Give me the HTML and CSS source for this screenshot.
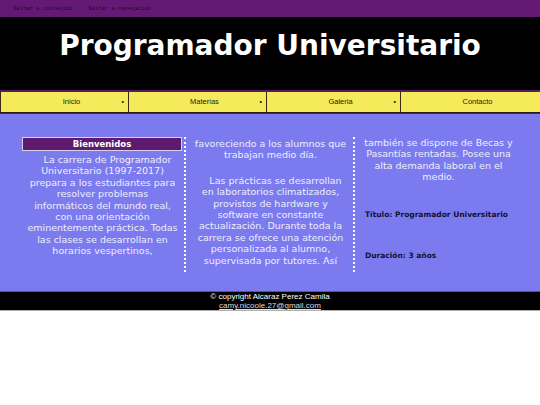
FILE: index.html
```html
<!DOCTYPE html>
<html lang="es">
<head>
<meta charset="utf-8">
<title>Programador Universitario</title>
<link rel="stylesheet" href="styles.css">
</head>
<body>
<div class="skip">
  <a href="#contenido">Saltar a contenido</a>
  <a href="#navegacion">Saltar a navegación</a>
</div>
<header class="header">
  <h1>Programador Universitario</h1>
</header>
<nav class="nav" id="navegacion">
  <a class="nav-item bullet" href="#">Inicio</a>
  <a class="nav-item bullet" href="#">Materias</a>
  <a class="nav-item bullet" href="#">Galeria</a>
  <a class="nav-item" href="#">Contacto</a>
</nav>
<main class="main" id="contenido">
  <div class="col col-1">
    <h2 class="welcome">Bienvenidos</h2>
    <p class="txt txt-first indent">La carrera de Programador Universitario (1997-2017) prepara a los estudiantes para resolver problemas informáticos del mundo real, con una orientación eminentemente práctica. Todas las clases se desarrollan en horarios vespertinos,</p>
  </div>
  <div class="col col-2">
    <p class="txt txt-top">favoreciendo a los alumnos que trabajan medio día.</p>
    <p class="txt txt-gap indent">Las prácticas se desarrollan en laboratorios climatizados, provistos de hardware y software en constante actualización. Durante toda la carrera se ofrece una atención personalizada al alumno, supervisada por tutores. Así</p>
  </div>
  <div class="col col-3">
    <p class="txt">también se dispone de Becas y Pasantías rentadas. Posee una alta demanda laboral en el medio.</p>
    <p class="label label-title">Título: Programador Universitario</p>
    <p class="label label-dur">Duración: 3 años</p>
  </div>
</main>
<footer class="footer">
  <div>© copyright Alcaraz Perez Camila</div>
  <a href="#">camy.nicoole.27@gmail.com</a>
</footer>
</body>
</html>
```
FILE: styles.css
```css
html, body {
  margin: 0;
  padding: 0;
  background: #ffffff;
}

.skip {
  height: 17px;
  background: #641a74;
  display: flex;
  align-items: center;
  gap: 16px;
  padding-left: 13px;
}
.skip a {
  font-family: "Liberation Mono", monospace;
  font-size: 5.5px;
  line-height: 6px;
  color: #1e0a24;
  text-decoration: none;
}

.header {
  background: #000000;
  padding: 12px 0 28px;
}
.header h1 {
  margin: 0;
  font-family: "DejaVu Sans", sans-serif;
  font-weight: bold;
  font-size: 28px;
  line-height: 33px;
  color: #ffffff;
  text-align: center;
}

.nav {
  display: grid;
  grid-template-columns: 128px 138px 134px 1fr;
  border-top: 2px solid #5b1a68;
  border-bottom: 1px solid #5b1a68;
  background: #f4ea5a;
}
.nav-item {
  position: relative;
  height: 20px;
  line-height: 20px;
  padding-left: 14px;
  text-align: center;
  border-left: 1px solid #3a2a0c;
  border-bottom: 1px solid #2a1820;
  font-family: "Liberation Sans", Arial, sans-serif;
  font-size: 7.5px;
  color: #222222;
  text-decoration: none;
}
.bullet::after {
  content: "•";
  position: absolute;
  right: 4px;
  top: 0;
  font-size: 7px;
  color: #111111;
}

.main {
  background: #7b7bef;
  display: grid;
  grid-template-columns: 164px 169px 1fr;
  padding: 23px 22px 19px;
  border-bottom: 1px solid #5252b4;
}
.col {
  padding-bottom: 6px;
}
.col-1 {
  padding-right: 2px;
  border-right: 2px dotted #ffffff;
}
.col-2 {
  padding-left: 4px;
  padding-right: 2px;
  border-right: 2px dotted #ffffff;
}
.col-3 {
  padding-left: 3px;
}

.welcome {
  width: 158px;
  margin: 0;
  background: #5e1a6e;
  border: 1px solid #d8d0ea;
  font-family: "DejaVu Sans", sans-serif;
  font-weight: bold;
  font-size: 8.5px;
  line-height: 12px;
  color: #ffffff;
  text-align: center;
}

.txt {
  margin: 0;
  width: 153px;
  padding-left: 4px;
  font-family: "DejaVu Sans", sans-serif;
  font-size: 9.5px;
  line-height: 11.4px;
  color: #eeeefc;
  text-align: center;
}
.indent {
  text-indent: 10px;
}
.txt-first {
  margin-top: 3px;
}
.txt-top {
  margin-top: 1px;
}
.txt-gap {
  margin-top: 14px;
}

.label {
  margin: 0;
  padding-left: 7px;
  font-family: "DejaVu Sans", sans-serif;
  font-weight: bold;
  font-size: 7.5px;
  line-height: 9px;
  color: #111133;
}
.label-title {
  margin-top: 27px;
}
.label-dur {
  margin-top: 32px;
}

.footer {
  background: #000000;
  border-bottom: 1px solid #b0b0b0;
  text-align: center;
  font-family: "Liberation Sans", Arial, sans-serif;
  font-size: 8px;
  line-height: 9px;
  color: #ffffff;
}
.footer a {
  color: #dddddd;
  text-decoration: underline;
}
```
